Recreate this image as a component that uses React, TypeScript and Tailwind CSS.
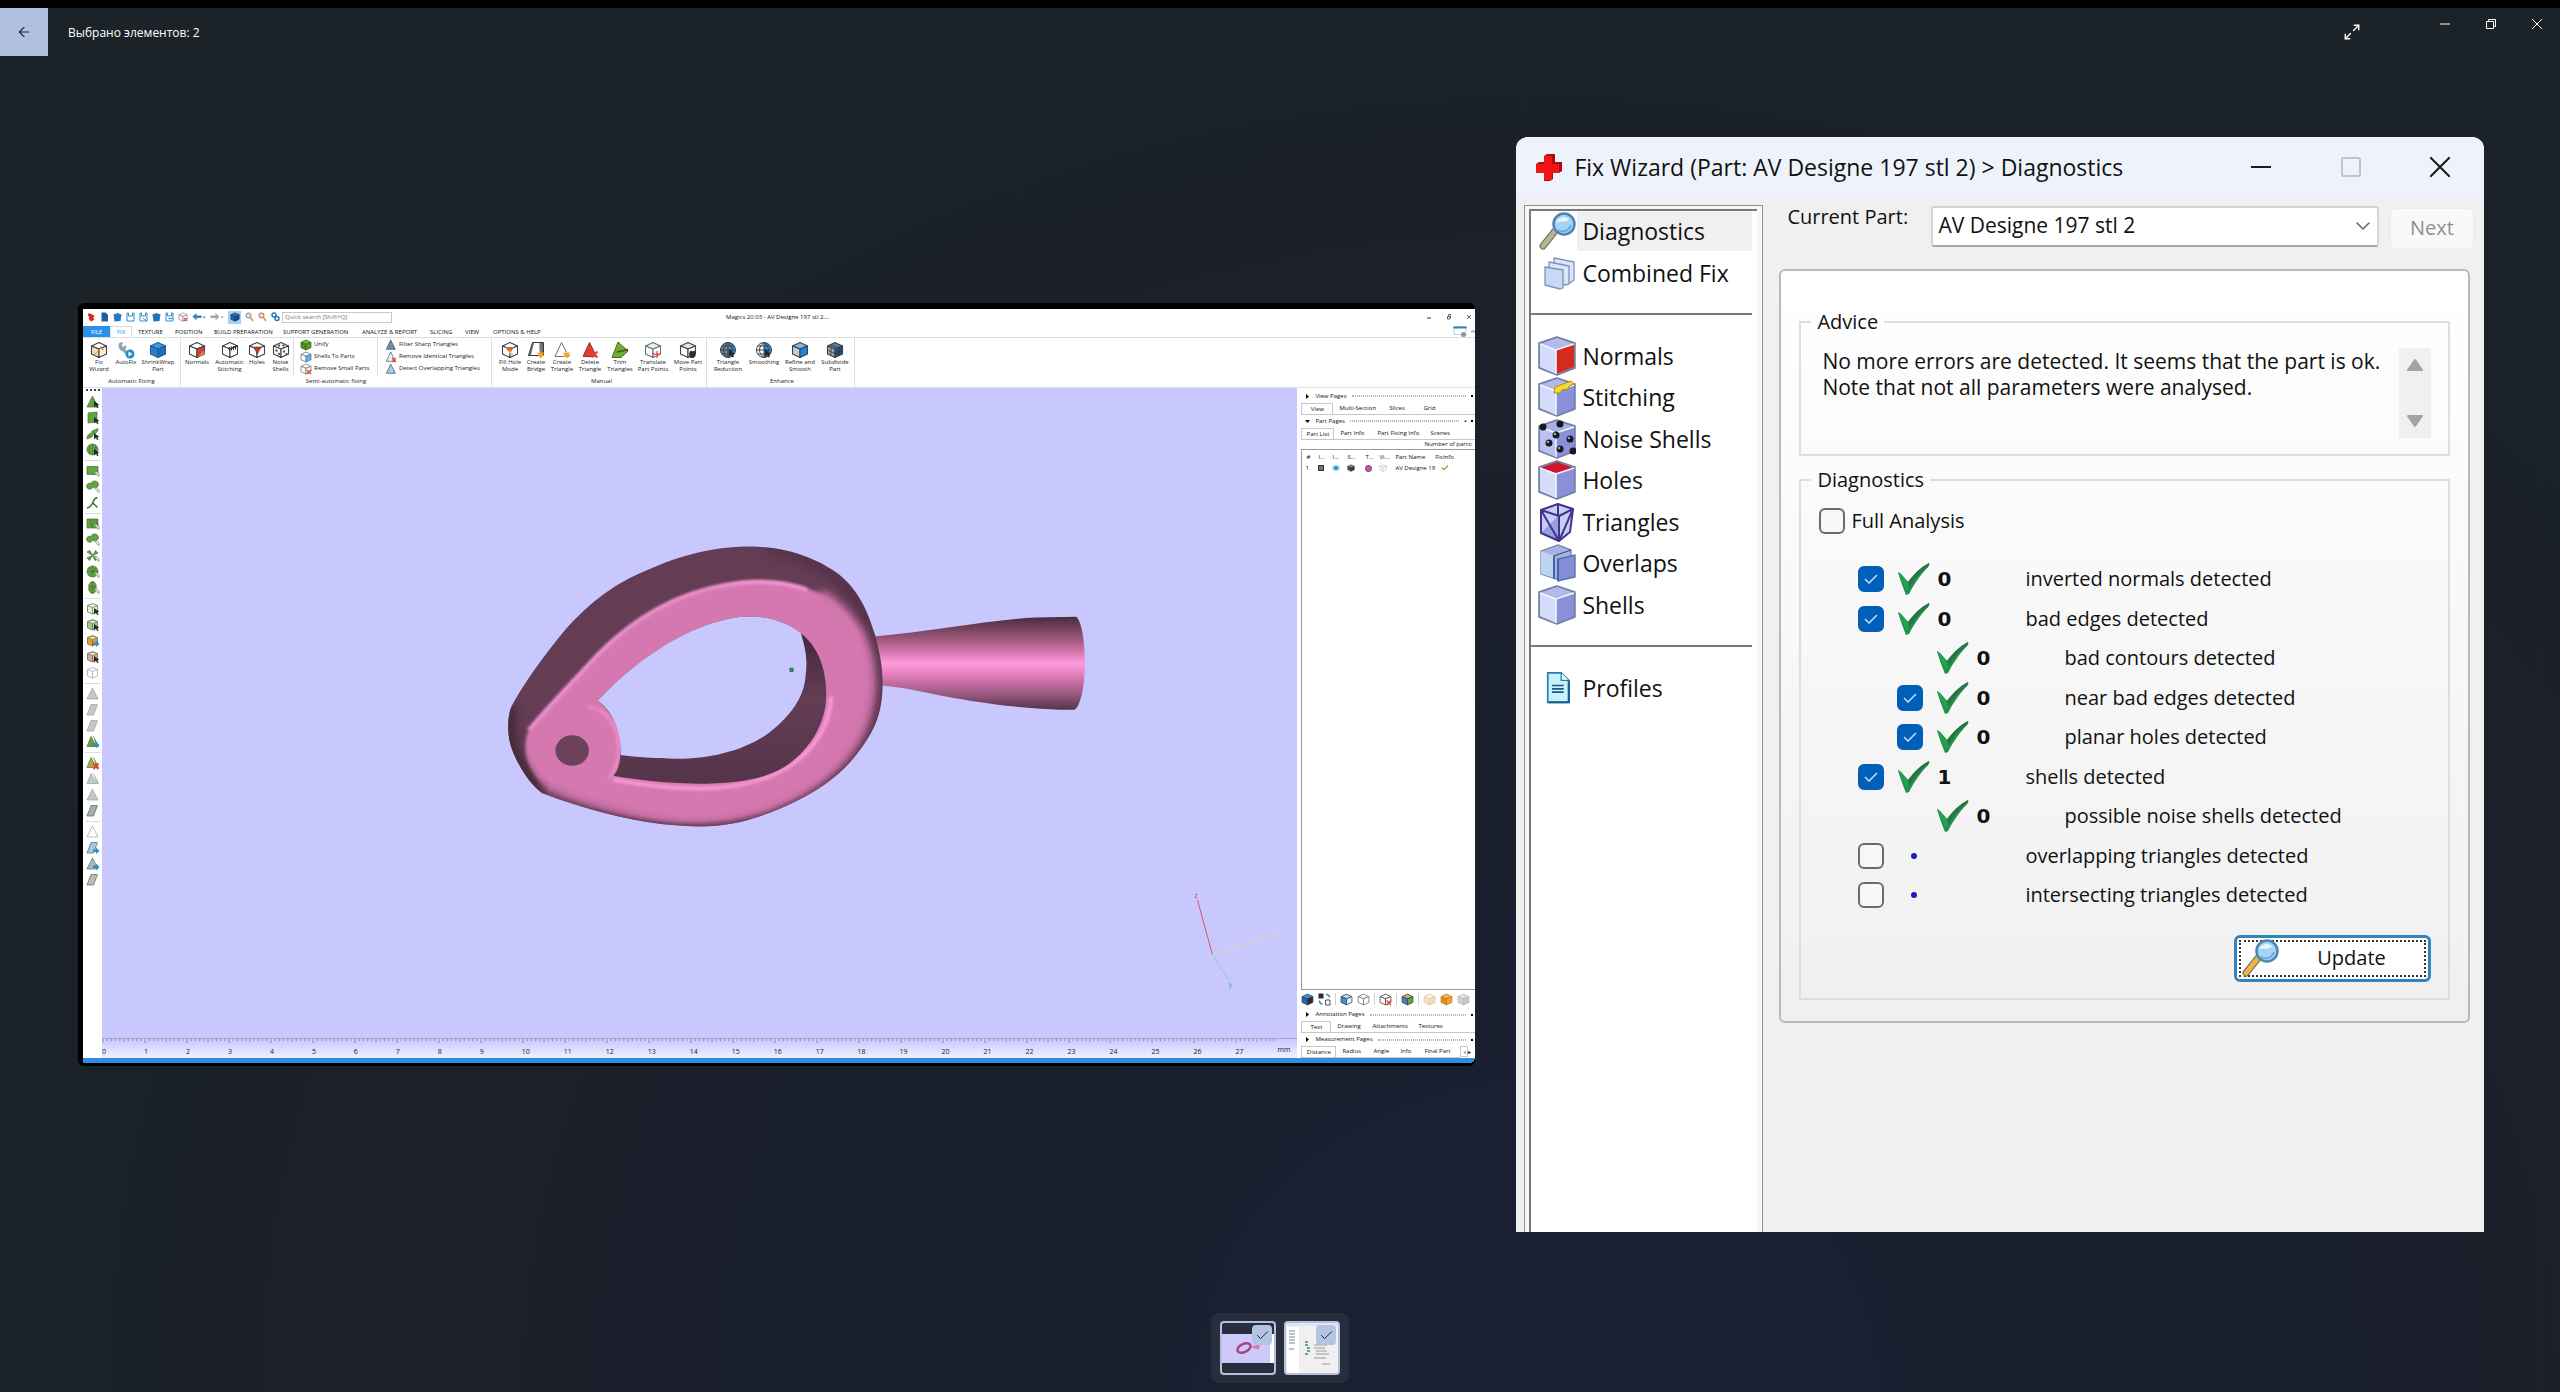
import React from 'react';
import { ArrowLeft, Check, ChevronDown, Maximize2 } from 'lucide-react';

/* ---------- ribbon icons ---------- */

interface CubeProps {
  size?: number;
  line?: string;
  top?: string;
  left?: string;
  right?: string;
  children?: React.ReactNode;
}

const Cube: React.FC<CubeProps> = ({
  size = 18,
  line = '#3d4248',
  top = '#fff',
  left = '#fff',
  right = '#fff',
  children,
}) => (
  <svg width={size} height={size} viewBox="0 0 36 36" className="shrink-0">
    <g stroke={line} strokeWidth="2.2" strokeLinejoin="round">
      <path d="M3 10 18 3l15 7-15 6z" fill={top} />
      <path d="M3 10l15 6v17L3 26z" fill={left} />
      <path d="M33 10l-15 6v17l15-7z" fill={right} />
    </g>
    {children}
  </svg>
);

const Cursor = () => <path d="M20 16v15l4-4 3 6 3-2-3-5h5z" fill="#22282e" />;
const Star = () => <path d="M27 19l2 5 5-2-2 5 4 3-6 1-2 5-3-5-6 1 4-4-3-5 5 1z" fill="#f0a92e" />;

const Globe: React.FC<{ dark: string }> = ({ dark }) => (
  <svg width="18" height="18" viewBox="0 0 36 36" className="shrink-0">
    <circle cx="18" cy="18" r="15" fill="#fff" />
    <path d="M18 3a15 15 0 0 1 0 30z" fill="#2f8ee0" />
    <path d="M18 3a15 15 0 0 0 0 30z" fill={dark} />
    <g fill="none" stroke="#3d4248" strokeWidth="2">
      <circle cx="18" cy="18" r="15" />
      <path d="M18 3v30M3 18h30M6 10h24M6 26h24M18 3c-12 8-12 22 0 30M18 3c12 8 12 22 0 30" />
    </g>
    <Cursor />
  </svg>
);

const Tri: React.FC<{ fill: string; line: string; children?: React.ReactNode; size?: number }> = ({
  fill,
  line,
  children,
  size = 18,
}) => (
  <svg width={size} height={size} viewBox="0 0 36 36" className="shrink-0">
    <path d="M17 3 31 31H4z" fill={fill} stroke={line} strokeWidth="2" strokeLinejoin="round" />
    {children}
  </svg>
);

const RedX = () => <path d="M21 21l12 12M33 21 21 33" stroke="#e5443a" strokeWidth="4" />;

interface RibbonItem {
  lines: string[];
  width: string;
  icon: React.ReactNode;
}

const autoFixing: RibbonItem[] = [
  {
    lines: ['Fix', 'Wizard'],
    width: 'w-8',
    icon: (
      <Cube left="#f7d9b0" right="#fbeedd">
        <path d="M8 28 22 14M21 10l1 6 6 1" stroke="#e0973a" strokeWidth="2" fill="none" />
      </Cube>
    ),
  },
  {
    lines: ['AutoFix'],
    width: 'w-[22px]',
    icon: (
      <svg width="18" height="18" viewBox="0 0 36 36">
        <path d="M3 8c0-5 6-7 10-4l-4 4 4 4 5-4c2 5 0 7-2 8l9 9-4 5-10-10C6 20 3 13 3 8z" fill="#9aa2a9" />
        <circle cx="26" cy="26" r="9" fill="#1c8fd0" />
        <path d="M23 21v10l8-5z" fill="#fff" />
      </svg>
    ),
  },
  { lines: ['ShrinkWrap', 'Part'], width: 'w-[42px]', icon: <Cube top="#3a9bea" left="#2680d3" right="#1f6fbe" line="#2b5c88" /> },
];

const semiAutomatic: RibbonItem[] = [
  {
    lines: ['Normals'],
    width: 'w-8',
    icon: (
      <Cube right="#d94330">
        <path d="M18 33l15-14v7z" fill="#f08a3c" />
      </Cube>
    ),
  },
  {
    lines: ['Automatic', 'Stitching'],
    width: 'w-[33px]',
    icon: (
      <Cube>
        <path d="M17 12v8M21 11v8M25 10v8M29 9v8M15 16l18-6" stroke="#2a2f35" strokeWidth="2" />
      </Cube>
    ),
  },
  {
    lines: ['Holes'],
    width: 'w-[22px]',
    icon: (
      <Cube>
        <path d="M11 12h15l-7 14z" fill="#c4342a" stroke="#3d2a28" />
      </Cube>
    ),
  },
  {
    lines: ['Noise', 'Shells'],
    width: 'w-[25px]',
    icon: (
      <Cube>
        <g fill="#5a6067">
          <circle cx="14" cy="9" r="2.4" />
          <circle cx="23" cy="9" r="2.4" />
          <circle cx="9" cy="19" r="2.4" />
          <circle cx="24" cy="21" r="2.4" />
          <circle cx="14" cy="26" r="2.4" />
          <circle cx="29" cy="26" r="2.4" />
        </g>
      </Cube>
    ),
  },
];

const manual: RibbonItem[] = [
  {
    lines: ['Fill Hole', 'Mode'],
    width: 'w-[26px]',
    icon: (
      <Cube>
        <path d="M8 12h18l-8 13z" fill="#d26a35" />
        <path d="M15 20l8 8" stroke="#e9b98c" strokeWidth="4" />
      </Cube>
    ),
  },
  {
    lines: ['Create', 'Bridge'],
    width: 'w-[26px]',
    icon: (
      <svg width="18" height="18" viewBox="0 0 36 36">
        <path d="M11 3h22v26H3z" fill="#6d757c" stroke="#343a40" strokeWidth="2" />
        <path d="M14 4h11v24H8z" fill="#fff" />
        <Star />
      </svg>
    ),
  },
  {
    lines: ['Create', 'Triangle'],
    width: 'w-[26px]',
    icon: (
      <Tri fill="#fff" line="#6b7178">
        <Star />
      </Tri>
    ),
  },
  {
    lines: ['Delete', 'Triangle'],
    width: 'w-[30px]',
    icon: (
      <Tri fill="#e23c32" line="#a52a24">
        <RedX />
      </Tri>
    ),
  },
  {
    lines: ['Trim', 'Triangles'],
    width: 'w-[30px]',
    icon: (
      <svg width="18" height="18" viewBox="0 0 36 36">
        <path d="M14 2 34 20 20 33 2 33z" fill="#74ac36" stroke="#436d1e" strokeWidth="2" />
        <path d="M12 22 34 17" stroke="#34591a" strokeWidth="3" />
      </svg>
    ),
  },
  {
    lines: ['Translate', 'Part Points'],
    width: 'w-[36px]',
    icon: (
      <Cube line="#6b7178" top="#e6f4fb">
        <path d="M16 26h16M26 20v14" stroke="#e5443a" strokeWidth="2.5" />
      </Cube>
    ),
  },
  {
    lines: ['Move Part', 'Points'],
    width: 'w-[34px]',
    icon: (
      <Cube top="#d7eefa">
        <path d="M21 22l3-3 3 2 3-2 3 3v8l-4 4h-6l-3-6z" fill="#2a2f35" />
      </Cube>
    ),
  },
];

const enhance: RibbonItem[] = [
  { lines: ['Triangle', 'Reduction'], width: 'w-[36px]', icon: <Globe dark="#7b848c" /> },
  { lines: ['Smoothing'], width: 'w-[36px]', icon: <Globe dark="#fff" /> },
  { lines: ['Refine and', 'Smooth'], width: 'w-[36px]', icon: <Cube top="#7fb7e8" left="#c3cbd2" right="#1d86e0" /> },
  {
    lines: ['Subdivide', 'Part'],
    width: 'w-[34px]',
    icon: (
      <Cube top="#557fa8" left="#9aa6b1" right="#23527f">
        <path d="M3 18l15 7 15-7M10 8l15 6M10 13v16M26 13v16" stroke="#2b3137" strokeWidth="1.5" fill="none" />
      </Cube>
    ),
  },
];

const RibbonGroup: React.FC<{ label: string; items: RibbonItem[]; className?: string; children?: React.ReactNode }> = ({
  label,
  items,
  className = '',
  children,
}) => (
  <div className={`flex flex-col border-r border-[#dedede] ${className}`}>
    <div className="flex h-[38px]">
      {items.map((item) => (
        <button key={item.lines.join(' ')} className={`flex flex-col items-center pt-[3px] ${item.width}`}>
          {item.icon}
          {item.lines.map((line) => (
            <span key={line} className="text-[6px] leading-[7px] whitespace-nowrap">
              {line}
            </span>
          ))}
        </button>
      ))}
      {children}
    </div>
    <div className="text-center text-[6px] leading-[11px]">{label}</div>
  </div>
);

const SmallCommand: React.FC<{ icon: React.ReactNode; text: string }> = ({ icon, text }) => (
  <button className="flex h-3 items-center gap-[2px] text-[6px] whitespace-nowrap">
    {icon}
    {text}
  </button>
);

/* ---------- Magics window ---------- */

const QuickAccess = () => (
  <div className="flex h-[17px] items-center">
    <div className="flex items-center gap-1 pl-1 text-[#2277bd]">
      <svg width="9" height="10" viewBox="0 0 18 20">
        <path d="M3 2l8 3 5 4-4 1 3 5-7 4-5-6 2-3-3-2z" fill="#d8261c" />
      </svg>
      <svg width="9" height="10" viewBox="0 0 18 20">
        <path d="M3 1h8l5 5v13H3z" fill="#1c5fa8" />
      </svg>
      <svg width="9" height="10" viewBox="0 0 18 20">
        <path d="M1 5l8-3 8 3-2 13-12 1z" fill="#2a78bd" />
      </svg>
      <svg width="9" height="10" viewBox="0 0 18 20">
        <path d="M2 2h3v6h8V2h3v16H2z" fill="none" stroke="#2f8fc6" strokeWidth="2" />
      </svg>
      <svg width="9" height="10" viewBox="0 0 18 20">
        <path d="M2 2h3v6h8V2h3v16H2zM8 12l8 6" fill="none" stroke="#2f8fc6" strokeWidth="2" />
      </svg>
      <svg width="9" height="10" viewBox="0 0 18 20">
        <path d="M1 5l8-3 8 3-2 13-12 1z" fill="#1f75b9" />
      </svg>
      <svg width="9" height="10" viewBox="0 0 18 20">
        <path d="M2 2h3v6h8V2h3v16H2zM7 13h9" fill="none" stroke="#2f8fc6" strokeWidth="2" />
      </svg>
      <Cube size={10} line="#7b8188">
        <RedX />
      </Cube>
      <svg width="14" height="10" viewBox="0 0 28 20">
        <path d="M1 9l8-7v5h10v5H9v5z" fill="#2b87d1" />
        <path d="M22 9h5l-3 4z" fill="#666" />
      </svg>
      <svg width="14" height="10" viewBox="0 0 28 20">
        <path d="M19 9l-8-7v5H1v5h10v5z" fill="#a3a9af" />
        <path d="M22 9h5l-3 4z" fill="#888" />
      </svg>
      <span className="grid h-[13px] w-[13px] place-items-center bg-[#a8d0f2]">
        <Cube size={10} top="#2a7cc2" left="#1f639f" right="#174f82" line="#123f69" />
      </span>
      <svg width="9" height="10" viewBox="0 0 18 20">
        <circle cx="7" cy="7" r="5" fill="#cfe2f2" stroke="#7b858e" strokeWidth="2" />
        <path d="M11 11l5 7" stroke="#dd9830" strokeWidth="3" />
      </svg>
      <svg width="9" height="10" viewBox="0 0 18 20">
        <circle cx="7" cy="7" r="5" fill="#fbe1dc" stroke="#c2574c" strokeWidth="2" />
        <path d="M11 11l5 7" stroke="#dd9830" strokeWidth="3" />
      </svg>
      <svg width="9" height="10" viewBox="0 0 18 20">
        <circle cx="6" cy="6" r="4" fill="none" stroke="#2277bd" strokeWidth="3" />
        <circle cx="12" cy="13" r="4" fill="none" stroke="#2277bd" strokeWidth="3" />
      </svg>
    </div>
    <input
      aria-label="Quick search"
      placeholder="Quick search [Shift+Q]"
      className="ml-[2px] h-[11px] w-[110px] border border-[#c8c8c8] px-[2px] text-[6px] placeholder:text-[#777]"
    />
    <div className="flex-1 pl-[334px] text-[6px] whitespace-nowrap text-[#111]">
      Magics 20.03 - AV Designe 197 stl 2....
    </div>
    <div className="flex gap-4 pr-1 text-[#333]">
      <button aria-label="Minimize">
        <svg width="4" height="6" viewBox="0 0 4 6">
          <path d="M0 4h4" stroke="currentColor" />
        </svg>
      </button>
      <button aria-label="Restore">
        <svg width="4" height="6" viewBox="0 0 8 12">
          <path d="M1 5h5v5H1zM3 4V1h5v6H6" fill="none" stroke="currentColor" strokeWidth="1.5" />
        </svg>
      </button>
      <button aria-label="Close">
        <svg width="4" height="6" viewBox="0 0 8 12">
          <path d="M0 2l8 8M8 2l-8 8" stroke="currentColor" strokeWidth="1.5" />
        </svg>
      </button>
    </div>
  </div>
);

const ribbonTabs = [
  { label: 'TEXTURE', width: 'w-[37px]' },
  { label: 'POSITION', width: 'w-[39px]' },
  { label: 'BUILD PREPARATION', width: 'w-[69px]' },
  { label: 'SUPPORT GENERATION', width: 'w-[79px]' },
  { label: 'ANALYZE & REPORT', width: 'w-[68px]' },
  { label: 'SLICING', width: 'w-[35px]' },
  { label: 'VIEW', width: 'w-[28px]' },
  { label: 'OPTIONS & HELP', width: 'w-[60px]' },
];

const RibbonTabs = () => (
  <div className="flex h-3 items-stretch border-b border-[#dedede] text-[6px] leading-[12px] text-[#111]">
    <button className="w-[27px] bg-[#2a8fe8] text-white">FILE</button>
    <button className="mr-[6px] w-[22px] border-x border-t border-[#dedede] leading-[10px] text-[#2a8fe8]">FIX</button>
    {ribbonTabs.map((tab) => (
      <button key={tab.label} className={`text-left whitespace-nowrap ${tab.width}`}>
        {tab.label}
      </button>
    ))}
    <span className="flex-1" />
    <svg width="22" height="11" viewBox="0 0 44 22">
      <path d="M2 1h24v16H2z" fill="#fff" stroke="#9cc8dc" strokeWidth="1.5" />
      <path d="M1 1h26v4H1z" fill="#2b87ab" />
      <circle cx="21" cy="17" r="5" fill="#8b9299" />
      <path d="M36 12l4-4 4 4z" fill="none" stroke="#555" />
    </svg>
  </div>
);

const Ribbon = () => (
  <div className="flex h-[50px] border-b border-[#e0e0e0] text-[#222]">
    <RibbonGroup label="Automatic Fixing" items={autoFixing} className="w-[98px]" />
    <RibbonGroup label="Semi-automatic fixing" items={semiAutomatic} className="w-[311px]">
      <div className="flex w-[84px] flex-col border-l border-[#dedede] pl-[6px] pt-[1px]">
        <SmallCommand text="Unify" icon={<Cube size={12} top="#79b23f" left="#4f8a22" right="#5d9a2c" line="#38651a" />} />
        <SmallCommand text="Shells To Parts" icon={<Cube size={12} right="#6db3ec" line="#4a6a86" />} />
        <SmallCommand
          text="Remove Small Parts"
          icon={
            <Cube size={12} line="#6a6f75">
              <RedX />
            </Cube>
          }
        />
      </div>
      <div className="flex flex-col border-l border-[#dedede] pl-[7px] pt-[1px]">
        <SmallCommand text="Filter Sharp Triangles" icon={<Tri size={12} fill="#6f8ea8" line="#33475a" />} />
        <SmallCommand
          text="Remove Identical Triangles"
          icon={
            <Tri size={12} fill="#eef3f7" line="#33475a">
              <RedX />
            </Tri>
          }
        />
        <SmallCommand text="Detect Overlapping Triangles" icon={<Tri size={12} fill="#9ccdea" line="#33475a" />} />
      </div>
    </RibbonGroup>
    <RibbonGroup label="Manual" items={manual} className="w-[215px] pl-[5px]" />
    <RibbonGroup label="Enhance" items={enhance} className="w-[148px] pl-[3px]" />
  </div>
);

const GREEN = '#5fa53a';
const GREY = '#c4c6c8';

type Tool = { shape: keyof typeof toolShapes; fill?: string; badge?: 'cursor' | 'brush' | 'x' | 'blue' };

const toolShapes = {
  triangle: 'M13 2 24 24H2z',
  quad: 'M4 4l18-2v20L4 24z',
  curve: 'M2 24c0-12 8-8 10-16l12-5c0 12-10 8-12 17z',
  sphere: 'M13 2a11 11 0 1 0 .1 0zM7 5v17M13 2v22M19 5v17',
  rect: 'M2 5h22v16H2z',
  blobs: 'M18 2a7 7 0 1 1-5 12 6 6 0 1 1-3-7 7 7 0 0 1 8-5z',
  branch: 'M2 24c8-2 10-6 12-12s4-8 9-9M14 14l9 9',
  mosaic: 'M2 4h22v18H2zM8 4l4 18M16 4l-4 18M20 4l2 18',
  burst: 'M13 13 2 6l6-3 5 10 6-10 5 5-11 5 11 6-6 4-5-10-6 10-5-5z',
  wheel: 'M13 2a11 11 0 1 0 .1 0zM13 2v22M2 13h22M5 5l16 16M21 5 5 21',
  oval: 'M13 1c10 0 10 24 0 24S3 1 13 1zM13 1v24M5 8l16 10M21 8 5 18',
  cube: 'M3 7l10-4 10 4v13l-10 4-10-4zM3 7l10 4 10-4M13 11v13',
  wedge: 'M10 3h13l-8 21H2z',
  pair: 'M10 3 20 23H2zM15 3l10 20h-5',
};

const toolGroups: Tool[][] = [
  [
    { shape: 'triangle', fill: GREEN, badge: 'cursor' },
    { shape: 'quad', fill: GREEN, badge: 'cursor' },
    { shape: 'curve', fill: GREEN, badge: 'cursor' },
    { shape: 'sphere', fill: GREEN, badge: 'cursor' },
  ],
  [{ shape: 'rect', fill: GREEN, badge: 'brush' }, { shape: 'blobs', fill: GREEN, badge: 'brush' }, { shape: 'branch' }],
  [
    { shape: 'mosaic', fill: GREEN, badge: 'brush' },
    { shape: 'blobs', fill: GREEN, badge: 'brush' },
    { shape: 'burst', fill: GREEN, badge: 'brush' },
    { shape: 'wheel', fill: GREEN, badge: 'brush' },
    { shape: 'oval', fill: GREEN, badge: 'brush' },
  ],
  [
    { shape: 'cube', fill: '#e3efda', badge: 'cursor' },
    { shape: 'cube', fill: '#a3cb86', badge: 'cursor' },
    { shape: 'cube', fill: '#e89a2b', badge: 'blue' },
    { shape: 'cube', fill: '#d9a49c', badge: 'cursor' },
    { shape: 'cube', fill: '#fff' },
  ],
  [
    { shape: 'triangle', fill: GREY },
    { shape: 'wedge', fill: GREY },
    { shape: 'wedge', fill: GREY },
    { shape: 'pair', fill: GREEN, badge: 'blue' },
  ],
  [
    { shape: 'pair', fill: '#a9a94a', badge: 'x' },
    { shape: 'pair', fill: GREY },
    { shape: 'triangle', fill: GREY },
    { shape: 'wedge', fill: '#aaaeb1' },
  ],
  [
    { shape: 'triangle', fill: '#fff' },
    { shape: 'wedge', fill: '#9fc9e6', badge: 'blue' },
    { shape: 'triangle', fill: '#a9b9c4', badge: 'blue' },
    { shape: 'wedge', fill: '#b9bbbd' },
  ],
];

const ToolIcon: React.FC<{ tool: Tool }> = ({ tool }) => {
  const pale = tool.fill === GREY || tool.fill === '#fff';
  return (
    <svg width="14" height="14" viewBox="0 0 28 28">
      <path
        d={toolShapes[tool.shape]}
        fill={tool.fill ?? 'none'}
        stroke={pale ? '#9a9ea2' : '#4c7040'}
        strokeWidth={tool.fill ? 1.4 : 3}
        strokeLinejoin="round"
      />
      {tool.badge === 'cursor' && <path d="M16 12v13l4-4 2 5 3-1-2-5h4z" fill="#20262b" />}
      {tool.badge === 'brush' && <path d="M17 16l8 9 2-3-7-8z" fill="#fff" stroke="#666" strokeWidth="1.4" />}
      {tool.badge === 'x' && <path d="M15 15l10 11M25 15 15 26" stroke="#e5443a" strokeWidth="4" />}
      {tool.badge === 'blue' && <path d="M14 17h6v-4l7 7-7 6v-4h-6z" fill="#2f8ad0" />}
    </svg>
  );
};

const ToolStrip = () => (
  <div className="flex w-[19px] shrink-0 flex-col items-center bg-white pt-[1px]">
    <div className="mb-px w-[14px] border-t-2 border-dotted border-[#444]" />
    {toolGroups.map((group, i) => (
      <div key={i} className="flex flex-col items-center border-b border-[#dcdcdc] py-[2px] last:border-0">
        {group.map((tool, j) => (
          <button key={j} aria-label={`${tool.shape} tool`} className="grid h-4 w-4 place-items-center">
            <ToolIcon tool={tool} />
          </button>
        ))}
      </div>
    ))}
  </div>
);

const BODY =
  'M75 560C110 480 160 400 200 340 270 240 340 185 400 155 500 100 580 80 665 80c95 2 165 40 215 85 50 50 70 115 88 185 12 60 18 100 17 150-1 90-25 140-55 190-40 70-100 120-150 150-80 50-160 80-240 80-120 0-250-35-390-100-30-30-50-65-70-120-18-50-15-110-5-140z';
const FACE =
  'M118 630C180 540 230 480 290 400 380 290 480 220 600 192c80-20 160-10 220 23 75 45 118 120 128 215 8 90-2 150-28 220-40 100-130 180-220 220-100 40-200 45-280 30-90-15-190-50-255-88-50-52-70-122-47-182z';
const OPENING =
  'M287 543c53-73 113-128 153-158 70-55 150-95 225-95 55 2 95 25 120 50 45 45 63 110 62 190-2 90-47 170-107 215-50 35-120 47-210 47-80-2-150-12-205-24 20-28 20-88 15-128-10-40-30-75-53-97z';
const THROUGH =
  'M287 543c53-73 113-128 153-158 70-55 150-95 225-95 55 2 95 25 120 50 15 60 15 90 12 120-2 70-37 130-97 185-60 50-140 72-220 72-50 0-100-5-137-11 2-56-13-126-56-163z';
const CONE =
  'M966 350c134-15 284-50 394-57l100-2c28 29 30 249-4 279-126 0-256-25-356-50-60-15-90-20-115-23z';

const Part = () => (
  <svg viewBox="0 0 1196 651" preserveAspectRatio="xMidYMid slice" className="h-full w-full">
    <defs>
      <linearGradient id="cone" x1="0" y1="0" x2="0" y2="1">
        <stop offset="0" stopColor="#4a2c3e" />
        <stop offset="0.2" stopColor="#90506f" />
        <stop offset="0.38" stopColor="#d676af" />
        <stop offset="0.5" stopColor="#ff9bdd" />
        <stop offset="0.65" stopColor="#da78b2" />
        <stop offset="0.85" stopColor="#91557a" />
        <stop offset="1" stopColor="#54334a" />
      </linearGradient>
      <linearGradient id="inside" x1="0" y1="0" x2="0" y2="1">
        <stop offset="0" stopColor="#3c2433" />
        <stop offset="0.5" stopColor="#643d55" />
        <stop offset="1" stopColor="#54344a" />
      </linearGradient>
      <filter id="soft" x="-20%" y="-20%" width="140%" height="140%">
        <feGaussianBlur stdDeviation="12" />
      </filter>
      <filter id="edge" x="-20%" y="-20%" width="140%" height="140%">
        <feGaussianBlur stdDeviation="4" />
      </filter>
      <clipPath id="body">
        <path d={BODY} />
      </clipPath>
    </defs>
    <g transform="translate(379 132) scale(0.408 0.3333)">
      <path d={CONE} fill="url(#cone)" />
      <path d={BODY} fill="#643c54" />
      <g clipPath="url(#body)">
        <path d={FACE} fill="#d678b0" filter="url(#edge)" />
        <path
          d="M840 235c80 80 115 145 115 245 0 110-30 190-85 255-90 100-190 155-320 160-130 0-260-35-390-95"
          fill="none"
          stroke="#d276ad"
          strokeWidth="40"
          strokeLinecap="round"
          filter="url(#soft)"
        />
        <path
          d="M700 90c170 30 265 150 283 390 4 150-70 300-220 380-130 80-260 80-400 40-90-25-150-50-230-95"
          fill="none"
          stroke="#4a2b40"
          strokeWidth="15"
          filter="url(#soft)"
        />
        <path
          d="M118 630C180 540 230 480 290 400 380 290 480 220 600 195c80-18 150-8 200 15"
          fill="none"
          stroke="#ff9fdf"
          strokeWidth="9"
          filter="url(#edge)"
        />
        <path d="M75 560c-15 80 0 170 75 262" fill="none" stroke="#3f2636" strokeWidth="26" filter="url(#soft)" />
      </g>
      <path
        d="M325 780c70 15 140 26 210 26 90 0 160-20 220-65 60-50 100-120 104-210"
        fill="none"
        stroke="#ff9fdf"
        strokeWidth="9"
        filter="url(#edge)"
      />
      <path d={OPENING} fill="url(#inside)" />
      <path d={THROUGH} fill="#c8c8ff" />
      <path d="M262 560c45 5 78 60 76 135-2 35-10 60-24 80" fill="none" stroke="#f493d0" strokeWidth="6" filter="url(#edge)" />
      <ellipse cx="224" cy="692" rx="41" ry="46" fill="#6b415b" />
      <path d="M758 445h8v10h-8z" fill="#2e9a6a" stroke="#1f5f49" strokeWidth="2" />
    </g>
    <g fill="none" strokeWidth="1">
      <path d="M1111 567l-15-55" stroke="#e0506a" />
      <path d="M1111 567l65-22" stroke="#dcdcb4" />
      <path d="M1111 567l17 27" stroke="#8fc7e6" />
    </g>
    <g fontFamily="Open Sans, sans-serif" fontSize="7">
      <text x="1093" y="510" fill="#e0305a">
        z
      </text>
      <text x="1127" y="599" fill="#3aa870">
        y
      </text>
    </g>
  </svg>
);

const Ruler = () => (
  <div className="grid h-5 shrink-0 grid-cols-[repeat(28,42fr)_20fr] border-t border-[#a9a9c4] bg-gradient-to-b from-[#c8c8ff] to-[#f0f0ff] text-[7px] leading-[10px] text-[#222]">
    {Array.from({ length: 28 }, (_, n) => (
      <div key={n} className="flex flex-col">
        <svg viewBox="0 0 40 4" preserveAspectRatio="none" className="h-1 w-full">
          <path d="M1 0v4M5 0v2M9 0v2M13 0v2M17 0v2M21 0v3M25 0v2M29 0v2M33 0v2M37 0v2" stroke="#77778c" strokeWidth="0.7" />
        </svg>
        <span className="mt-1">{n}</span>
      </div>
    ))}
    <span className="pt-[6px]">mm</span>
  </div>
);

const PanelHeading: React.FC<{ title: string; open?: boolean }> = ({ title, open }) => (
  <div className="flex h-[13px] shrink-0 items-center gap-[5px] pl-1 pr-[2px]">
    <svg width="5" height="5" viewBox="0 0 10 10">
      <path d={open ? 'M0 2h10l-5 6z' : 'M2 0l6 5-6 5z'} fill="#000" />
    </svg>
    <span>{title}</span>
    <span className="h-[2px] flex-1 border-y border-dotted border-[#b4b4b4]" />
    {open && <span>▪</span>}
    <span className="h-[2px] w-[2px] bg-black" />
  </div>
);

const PanelTabs: React.FC<{ tabs: { label: string; width: string }[] }> = ({ tabs }) => (
  <div className="flex h-3 shrink-0 items-end border-b border-[#c8c8c8]">
    {tabs.map((tab, i) => (
      <button
        key={tab.label}
        className={`h-[11px] leading-[11px] whitespace-nowrap ${tab.width} ${
          i === 0 ? 'border-x border-t border-[#c8c8c8] text-center' : 'pl-[6px] text-left'
        }`}
      >
        {tab.label}
      </button>
    ))}
  </div>
);

const SidePanel = () => (
  <div className="flex w-[178px] shrink-0 flex-col overflow-hidden bg-white pl-[4px] pt-[2px] text-[6px] leading-[9px] text-[#111]">
    <PanelHeading title="View Pages" />
    <PanelTabs
      tabs={[
        { label: 'View', width: 'w-8' },
        { label: 'Multi-Section', width: 'w-[50px]' },
        { label: 'Slices', width: 'w-[34px]' },
        { label: 'Grid', width: 'w-8' },
      ]}
    />
    <PanelHeading title="Part Pages" open />
    <PanelTabs
      tabs={[
        { label: 'Part List', width: 'w-[33px]' },
        { label: 'Part Info', width: 'w-[37px]' },
        { label: 'Part Fixing Info', width: 'w-[53px]' },
        { label: 'Scenes', width: 'w-8' },
      ]}
    />
    <div className="pr-[3px] text-right">Number of parts:</div>
    <div className="min-h-0 flex-1 border-y border-l border-[#9a9a9a]">
      <table className="mt-[3px] table-fixed text-left">
        <thead>
          <tr className="h-[10px] [&>th]:font-normal">
            <th className="w-[16px] pl-1">#</th>
            <th className="w-[14px]">I...</th>
            <th className="w-[15px]">I...</th>
            <th className="w-[18px]">S...</th>
            <th className="w-[14px]">T...</th>
            <th className="w-[16px]">Vi...</th>
            <th className="w-[39px]">Part Name</th>
            <th className="w-[25px]">FixInfo</th>
          </tr>
        </thead>
        <tbody>
          <tr className="h-[11px]">
            <td className="pl-[3px]">1</td>
            <td>
              <input
                type="checkbox"
                defaultChecked
                aria-label="Part selected"
                className="block h-[6px] w-[6px] appearance-none border border-[#333] checked:bg-[#777]"
              />
            </td>
            <td>
              <svg width="8" height="8" viewBox="0 0 16 16">
                <ellipse cx="8" cy="8" rx="8" ry="6" fill="#a7dcf5" />
                <circle cx="8" cy="8" r="4" fill="#2c8dc4" />
              </svg>
            </td>
            <td>
              <Cube size={8} top="#8b9095" left="#4c5054" right="#34383c" />
            </td>
            <td>
              <svg width="7" height="7" viewBox="0 0 14 14">
                <circle cx="7" cy="7" r="6" fill="#d0599a" stroke="#7c2f63" strokeWidth="2" />
              </svg>
            </td>
            <td>
              <Cube size={8} line="#b0b3b6" />
            </td>
            <td className="whitespace-nowrap">AV Designe 19</td>
            <td>
              <Check size={8} strokeWidth={4} className="ml-[6px] text-[#79b73a]" />
            </td>
          </tr>
        </tbody>
      </table>
    </div>
    <div className="flex h-[18px] shrink-0 items-center gap-[4px]">
      <Cube size={13} top="#3d9ade" left="#1e6aa8" right="#2a2f35" />
      <svg width="13" height="13" viewBox="0 0 26 26">
        <path d="M1 1h10v10H1z" fill="#2a2f35" />
        <path d="M15 14h9v10h-9z" fill="#fff" stroke="#555" strokeWidth="2" />
        <path d="M16 3c5 0 7 2 7 6M3 15c0 5 2 7 6 7" fill="none" stroke="#2f8ad0" strokeWidth="3" />
      </svg>
      <span className="h-3 w-px bg-[#d0d0d0]" />
      <Cube size={13} top="#bfe0f6" left="#3793d6" right="#e5f2fb" />
      <Cube size={13} line="#6b7178" />
      <span className="h-3 w-px bg-[#d0d0d0]" />
      <Cube size={13}>
        <RedX />
      </Cube>
      <span className="h-3 w-px bg-[#d0d0d0]" />
      <Cube size={13} top="#e5b257" left="#2f8ad0" right="#66a343" />
      <span className="h-3 w-px bg-[#d0d0d0]" />
      <Cube size={13} top="#faf0dd" left="#f3e2c4" right="#f1ddb8" line="#d8cbb2" />
      <Cube size={13} top="#f4bb4d" left="#e08f1f" right="#eda637" line="#c27c1b" />
      <Cube size={13} top="#e3e4e5" left="#d1d2d3" right="#c8c9ca" line="#b4b6b8" />
    </div>
    <PanelHeading title="Annotation Pages" />
    <PanelTabs
      tabs={[
        { label: 'Text', width: 'w-[30px]' },
        { label: 'Drawing', width: 'w-[35px]' },
        { label: 'Attachments', width: 'w-[46px]' },
        { label: 'Textures', width: 'w-8' },
      ]}
    />
    <PanelHeading title="Measurement Pages" />
    <div className="flex shrink-0">
      <PanelTabs
        tabs={[
          { label: 'Distance', width: 'w-[35px]' },
          { label: 'Radius', width: 'w-[31px]' },
          { label: 'Angle', width: 'w-[27px]' },
          { label: 'Info', width: 'w-[24px]' },
          { label: 'Final Part', width: 'w-[42px]' },
        ]}
      />
      <button aria-label="Scroll tabs left" className="h-[11px] w-2 border border-[#c8c8c8] leading-[8px] text-[#999]">
        ◂
      </button>
      <button aria-label="Scroll tabs right" className="h-[11px] leading-[10px]">
        ▸
      </button>
    </div>
  </div>
);

const MagicsShot = () => (
  <section className="flex aspect-[1398/764] min-w-0 flex-col overflow-hidden rounded-md bg-black pb-[3px] pl-[5px] pt-[6px]">
    <div className="flex flex-1 flex-col overflow-hidden rounded-br-md bg-white">
      <QuickAccess />
      <RibbonTabs />
      <Ribbon />
      <div className="flex min-h-0 flex-1">
        <ToolStrip />
        <div className="flex min-w-0 flex-1 flex-col">
          <div className="min-h-0 flex-1 bg-[#c8c8ff]">
            <Part />
          </div>
          <Ruler />
        </div>
        <SidePanel />
      </div>
      <div className="h-[5px] bg-[#2f8de0]" />
    </div>
  </section>
);

/* ---------- Fix Wizard window ---------- */

const Magnifier: React.FC<{ handle: string }> = ({ handle }) => (
  <svg width="38" height="38" viewBox="0 0 38 38">
    <path d="M17 19 5 34" stroke="#6d6a58" strokeWidth="7" strokeLinecap="round" />
    <path d="M17 19 5 34" stroke={handle} strokeWidth="5" strokeLinecap="round" />
    <circle cx="26" cy="12" r="10.5" fill="#a5d3f5" stroke="#4f86ad" strokeWidth="2.5" />
    <path d="M18 11c1-6 9-8 13-4-3 5-9 1-13 4z" fill="#e4f5ff" />
    <path d="M20 18c5 3 11 1 13-5" stroke="#6aa9dc" strokeWidth="2" fill="none" />
  </svg>
);

interface BlockProps {
  top?: string;
  left?: string;
  right?: string;
  children?: React.ReactNode;
}

const Block: React.FC<BlockProps> = ({ top = '#b3b9ea', left = '#d3dcf8', right = '#8a90d8', children }) => (
  <svg width="38" height="40" viewBox="0 0 38 40">
    <path d="M1 7 19 1l18 6v25L19 39 1 32z" fill="#8a90d8" stroke="#6e7fa0" strokeWidth="1.5" strokeLinejoin="round" />
    <path d="M2 8 19 2l17 6-18 5z" fill={top} />
    <path d="M2 8l16 6v24L2 31z" fill={left} />
    <path d="M36 8l-18 6v24l18-7z" fill={right} />
    <path d="M2 8l16 6 18-6M18 14v24" stroke="#f4f6ff" strokeWidth="1.5" fill="none" />
    {children}
  </svg>
);

const wizardPages: ({ label: string; icon: React.ReactNode } | null)[] = [
  { label: 'Diagnostics', icon: <Magnifier handle="#b9b58e" /> },
  {
    label: 'Combined Fix',
    icon: (
      <svg width="38" height="34" viewBox="0 0 38 34">
        <g fill="#dbe6fb" stroke="#7e93b8" strokeWidth="1.3" strokeLinejoin="round">
          <path d="M16 2l20 4v18l-4 3-16-5z" />
          <path d="M11 6l20 4v18l-4 1-16-4z" />
          <path d="M7 11l18 3v18l-3 1-15-4z" fill="#c8d8f6" />
        </g>
      </svg>
    ),
  },
  null,
  { label: 'Normals', icon: <Block right="#d42a20" /> },
  {
    label: 'Stitching',
    icon: (
      <Block>
        <path d="M16 16l1-6 16-6 3 3-5 2-1 3-6 1-2 3z" fill="#f5d92c" stroke="#a88d18" />
      </Block>
    ),
  },
  {
    label: 'Noise Shells',
    icon: (
      <Block top="#a9b0e2" left="#b9c2ee">
        <g fill="#15181f">
          <circle cx="5" cy="8" r="3.5" />
          <circle cx="22" cy="5" r="3.5" />
          <circle cx="18" cy="16" r="3.5" />
          <circle cx="11" cy="24" r="3.5" />
          <circle cx="32" cy="20" r="3.5" />
          <circle cx="22" cy="30" r="3.5" />
          <circle cx="35" cy="32" r="3.5" />
        </g>
        <g fill="#98a6b8">
          <circle cx="17" cy="15" r="1.3" />
          <circle cx="10" cy="23" r="1.3" />
          <circle cx="31" cy="19" r="1.3" />
          <circle cx="21" cy="29" r="1.3" />
        </g>
      </Block>
    ),
  },
  { label: 'Holes', icon: <Block top="#cf1730" /> },
  {
    label: 'Triangles',
    icon: (
      <svg width="38" height="40" viewBox="0 0 38 40">
        <path d="M3 8 20 2l15 5-3 23-11 9L3 31z" fill="#c9cdf4" />
        <path d="M20 14 3 31l18 8z" fill="#989ee0" />
        <g fill="none" stroke="#40348c" strokeWidth="2" strokeLinejoin="round">
          <path d="M3 8 20 2l15 5-3 23-11 9L3 31z" />
          <path d="M3 8l18 6 14-7M21 14v25M21 39 3 8M21 39 35 7M20 2v12" />
        </g>
      </svg>
    ),
  },
  {
    label: 'Overlaps',
    icon: (
      <svg width="38" height="40" viewBox="0 0 38 40">
        <path d="M3 8 20 2l13 5v22L18 36 3 31z" fill="#a9b2e6" stroke="#6e7fa0" strokeWidth="1.3" />
        <path d="M3 8l13 5v22L3 31z" fill="#bcd3f2" />
        <path d="M16 13 33 7" stroke="#456" strokeWidth="1.3" />
        <path d="M20 16l17-4v22l-17 4z" fill="#858dd6" stroke="#5a6aa6" strokeWidth="1.3" />
        <path d="M16 13v23M20 16v22" stroke="#3d68a8" strokeWidth="2" />
      </svg>
    ),
  },
  { label: 'Shells', icon: <Block /> },
  null,
  {
    label: 'Profiles',
    icon: (
      <svg width="38" height="32" viewBox="0 0 38 38">
        <path d="M8 1h16l9 9v26H8z" fill="#c9f0fb" stroke="#1f7fb2" strokeWidth="2" />
        <path d="M24 1v9h9" fill="#fff" stroke="#1f7fb2" strokeWidth="1.5" />
        <path d="M33 10v26H9" fill="none" stroke="#145c92" strokeWidth="2.5" />
        <path d="M13 16h14M13 20h14M13 24h14" stroke="#155a86" strokeWidth="2" />
      </svg>
    ),
  },
];

const WizardNav = () => (
  <nav className="w-[239px] shrink-0 border border-b-0 border-[#8d8f94] bg-[#f6f6f6] pl-1 pr-[5px] pt-[3px]">
    <div className="h-full border-l-2 border-t-2 border-[#77797e] bg-white">
      <ul className="grid h-[498px] auto-rows-fr pr-[5px]">
        {wizardPages.map((page, i) =>
          page ? (
            <li key={page.label} className="flex">
              <button className="flex flex-1 items-center text-left text-[23px]">
                <span className="grid w-[46px] place-items-center pl-[6px]">{page.icon}</span>
                <span className={`flex h-[40px] flex-1 items-center pl-[5px] ${i === 0 ? 'bg-[#f0f0f0]' : ''}`}>
                  {page.label}
                </span>
              </button>
            </li>
          ) : (
            <li key={i} className="flex items-center">
              <hr className="flex-1 border-t-2 border-[#77797e]" />
            </li>
          )
        )}
      </ul>
    </div>
  </nav>
);

const Tick: React.FC<{ id: string; checked?: boolean }> = ({ id, checked }) => (
  <span className="grid h-[26px] w-[26px] shrink-0 place-items-center">
    <input
      id={id}
      type="checkbox"
      defaultChecked={checked}
      className="peer col-start-1 row-start-1 h-[26px] w-[26px] appearance-none rounded-md border-2 border-[#6b6b6b] bg-[#f8f8f8] checked:border-[#005fb8] checked:bg-[#005fb8]"
    />
    <svg
      width="14"
      height="10"
      viewBox="0 0 14 10"
      className="pointer-events-none invisible col-start-1 row-start-1 peer-checked:visible"
    >
      <path d="M1 5l4 4 8-8" fill="none" stroke="#bcdcf8" strokeWidth="1.6" />
    </svg>
  </span>
);

const GreenCheck = () => (
  <svg width="33" height="32" viewBox="0 0 33 32">
    <path d="M1 9l3 2 7 8C17 11 24 4 32 0c1 1 0 3-1 4-7 7-14 17-19 27l-3 1C6 24 3 17 1 9z" fill="#1f9149" />
    <path d="M11 19C17 11 24 4 32 0l-1 4C24 8 17 16 12 25z" fill="#2c7447" />
    <path d="M1 9l3 2 7 8 1 6-2 3C7 22 3 16 1 9z" fill="#22a14e" />
  </svg>
);

interface Finding {
  text: string;
  count?: number;
  box?: 'on' | 'off';
  nested?: boolean;
}

const findings: Finding[] = [
  { text: 'inverted normals detected', count: 0, box: 'on' },
  { text: 'bad edges detected', count: 0, box: 'on' },
  { text: 'bad contours detected', count: 0, nested: true },
  { text: 'near bad edges detected', count: 0, box: 'on', nested: true },
  { text: 'planar holes detected', count: 0, box: 'on', nested: true },
  { text: 'shells detected', count: 1, box: 'on' },
  { text: 'possible noise shells detected', count: 0, nested: true },
  { text: 'overlapping triangles detected', box: 'off' },
  { text: 'intersecting triangles detected', box: 'off' },
];

const FindingRow: React.FC<{ finding: Finding; index: number }> = ({ finding, index }) => {
  const id = `finding-${index}`;
  return (
    <li className={`flex items-center ${finding.nested ? 'pl-[96px]' : 'pl-[57px]'}`}>
      {finding.box ? <Tick id={id} checked={finding.box === 'on'} /> : <span className="w-[26px]" />}
      <span className="ml-[13px] grid w-[33px] place-items-center">
        {finding.count !== undefined ? <GreenCheck /> : <span className="h-[6px] w-[6px] rounded-full bg-[#1d1dc0]" />}
      </span>
      <b className="ml-[7px] w-[88px] font-['DejaVu_Sans',sans-serif]">{finding.count}</b>
      {finding.box ? <label htmlFor={id}>{finding.text}</label> : <span>{finding.text}</span>}
    </li>
  );
};

const FixWizard = () => (
  <section className="flex aspect-[968/1096] min-w-0 flex-col overflow-hidden rounded-t-xl bg-[#f0f0f0] text-[20px] text-[#111]">
    <header className="flex h-[61px] shrink-0 items-center bg-[#eef3fb] pl-[19px]">
      <svg width="28" height="28" viewBox="0 0 28 28">
        <path d="M9 3l3-2h8v8h7v9l-3 2h-6v6l-3 2H9v-8H1v-9l3-2h5z" fill="#a80d0d" />
        <path d="M9 3h8v8h7v9h-7v7H9v-7H1v-9h8z" fill="#f01414" />
      </svg>
      <h1 className="ml-[11px] flex-1 text-[23px] whitespace-nowrap">
        Fix Wizard (Part: AV Designe 197 stl 2) &gt; Diagnostics
      </h1>
      <button aria-label="Minimize" className="grid h-full w-[90px] place-items-center">
        <svg width="20" height="20" viewBox="0 0 20 20">
          <path d="M0 10h20" stroke="#1a1a1a" strokeWidth="2" />
        </svg>
      </button>
      <button aria-label="Maximize" disabled className="grid h-full w-[90px] place-items-center">
        <svg width="20" height="20" viewBox="0 0 20 20">
          <rect x="1" y="1" width="18" height="18" rx="1" fill="none" stroke="#c0c4cc" strokeWidth="2" />
        </svg>
      </button>
      <button aria-label="Close" className="grid h-full w-[88px] place-items-center">
        <svg width="20" height="20" viewBox="0 0 20 20">
          <path d="M0 0l20 20M20 0 0 20" stroke="#1a1a1a" strokeWidth="2" />
        </svg>
      </button>
    </header>

    <div className="flex flex-1 pl-2 pr-[10px] pt-[7px]">
      <WizardNav />
      <div className="ml-4 flex min-w-0 flex-1 flex-col">
        <div className="flex items-start pl-2">
          <label htmlFor="current-part" className="w-[144px] leading-[24px]">
            Current Part:
          </label>
          <div className="mt-px grid flex-1 items-center">
            <select
              id="current-part"
              className="col-start-1 row-start-1 h-[41px] w-full appearance-none rounded-[3px] border-2 border-[#d4d4d4] border-b-[#a8a8a8] bg-white pl-[5px] text-[21px]"
            >
              <option>AV Designe 197 stl 2</option>
            </select>
            <ChevronDown
              size={24}
              strokeWidth={1.5}
              className="pointer-events-none col-start-1 row-start-1 mr-1 justify-self-end text-[#606060]"
            />
          </div>
          <button
            disabled
            className="ml-[11px] mt-[3px] h-[41px] w-[84px] rounded-md border border-[#ebebeb] bg-[#f9f9f9] text-[#8f8f8f]"
          >
            Next
          </button>
        </div>

        <div className="mt-5 mr-1 flex flex-col rounded-md border-2 border-[#b9b9b9] bg-gradient-to-b from-white to-[#f0f0f0] px-[18px] pb-[21px] pt-[39px]">
          <fieldset className="h-[146px] border-2 border-[#dedede] pl-[21px] pr-[17px]">
            <legend className="-ml-[11px] px-[6px] leading-[24px]">Advice</legend>
            <div className="flex items-start pt-[14px]">
              <textarea
                readOnly
                aria-label="Advice"
                className="h-[90px] min-w-0 flex-1 resize-none overflow-hidden bg-transparent text-[21px] leading-[26px] whitespace-pre"
                value={
                  'No more errors are detected. It seems that the part is ok.\nNote that not all parameters were analysed.'
                }
              />
              <div className="flex h-[90px] w-8 flex-col items-center justify-between bg-[#f0f0f0] py-[9px]">
                <button aria-label="Scroll up">
                  <svg width="18" height="15" viewBox="0 0 18 15">
                    <path d="M9 3 16 13H2z" fill="#a3a3a3" stroke="#a3a3a3" strokeWidth="2" strokeLinejoin="round" />
                  </svg>
                </button>
                <button aria-label="Scroll down">
                  <svg width="18" height="15" viewBox="0 0 18 15">
                    <path d="M9 12 2 2h14z" fill="#a3a3a3" stroke="#a3a3a3" strokeWidth="2" strokeLinejoin="round" />
                  </svg>
                </button>
              </div>
            </div>
          </fieldset>

          <fieldset className="mt-3 border-2 border-[#dedede] pb-4">
            <legend className="ml-[10px] px-[6px] leading-[24px]">Diagnostics</legend>
            <div className="flex items-center gap-[6px] pl-[18px] pt-[14px]">
              <Tick id="full-analysis" />
              <label htmlFor="full-analysis">Full Analysis</label>
            </div>
            <ul className="mt-6 grid h-[355px] auto-rows-fr">
              {findings.map((finding, i) => (
                <FindingRow key={finding.text} finding={finding} index={i} />
              ))}
            </ul>
            <div className="mt-5 flex justify-end pr-[17px]">
              <button className="h-[47px] w-[197px] rounded-md border-[3px] border-[#2f86bd] bg-white p-[2px]">
                <span className="flex h-full items-center border-2 border-dotted border-[#333]">
                  <Magnifier handle="#f0b24c" />
                  <span className="flex-1 text-center">Update</span>
                </span>
              </button>
            </div>
          </fieldset>
        </div>
      </div>
    </div>
  </section>
);

/* ---------- photo viewer shell ---------- */

const Badge = () => (
  <span className="absolute right-[2px] top-[2px] grid h-5 w-5 place-items-center rounded bg-[#b3c3e4]">
    <Check size={15} strokeWidth={1.5} className="text-[#14203a]" />
  </span>
);

const Filmstrip = () => (
  <footer className="mb-[9px] flex justify-center">
    <div className="flex gap-2 rounded-lg bg-[#282e3c] px-[9px] py-2">
      <button aria-label="Magics" className="relative h-[54px] w-14 overflow-hidden rounded border-2 border-[#b3bfdd] bg-[#282e3c]">
        <span className="flex h-[29px] border-r-4 border-white bg-[#cfc8fb]">
          <svg viewBox="0 0 48 29" className="w-full">
            <ellipse cx="22" cy="14" rx="7" ry="4" transform="rotate(-25 22 14)" fill="none" stroke="#a9457f" strokeWidth="2.5" />
            <path d="M29 13l8-2v4z" fill="#d678b0" stroke="#d678b0" />
          </svg>
        </span>
        <Badge />
      </button>
      <button aria-label="Fix Wizard" className="relative h-[54px] w-14 overflow-hidden rounded border-2 border-[#b3bfdd] bg-[#f0f0f0]">
        <svg viewBox="0 0 52 50" className="h-full w-full">
          <path d="M0 0h52v3H0z" fill="#dfe6f2" />
          <path d="M1 4h12v46H1z" fill="#fff" />
          <path d="M3 8h6M3 11h6M3 14h6M3 17h6M3 20h6M3 26h5" stroke="#7c86a8" />
          <path d="M19 19h3M19 22h3M21 25h3M21 28h3M19 31h3" stroke="#2f9a55" strokeWidth="1.6" />
          <path d="M28 22h13M28 25h11M30 28h11M30 31h13M28 35h12M36 41h8" stroke="#9a9a9a" />
        </svg>
        <Badge />
      </button>
    </div>
  </footer>
);

const App: React.FC = () => (
  <div className="flex min-h-screen flex-col bg-[#1b2228] bg-[radial-gradient(ellipse_at_60%_100%,#1a1f34_0%,#1b2029_55%,#1b2228_80%)] font-['Open_Sans','Noto_Sans',sans-serif] text-white">
    <div className="h-2 bg-black" />
    <header className="flex h-12 items-center">
      <button aria-label="Back" className="grid h-12 w-12 place-items-center bg-[#b0c0e0] text-[#1c2740]">
        <ArrowLeft size={16} strokeWidth={1.8} />
      </button>
      <span className="ml-5 flex-1 pt-px text-[12px]">Выбрано элементов: 2</span>
      <button aria-label="Full screen" className="mr-[46px] grid h-12 w-12 place-items-center">
        <Maximize2 size={18} strokeWidth={1.8} />
      </button>
      <div className="flex self-start">
        <button aria-label="Minimize" className="grid h-8 w-[46px] place-items-center">
          <svg width="10" height="10" viewBox="0 0 10 10">
            <path d="M0 5h10" stroke="currentColor" />
          </svg>
        </button>
        <button aria-label="Restore" className="grid h-8 w-[46px] place-items-center">
          <svg width="10" height="10" viewBox="0 0 10 10">
            <path d="M.5 2.5h7v7h-7zM2.5 2V.5h7v7H8" fill="none" stroke="currentColor" />
          </svg>
        </button>
        <button aria-label="Close" className="grid h-8 w-[46px] place-items-center">
          <svg width="10" height="10" viewBox="0 0 10 10">
            <path d="M0 0l10 10M10 0 0 10" stroke="currentColor" />
          </svg>
        </button>
      </div>
    </header>
    <main className="grid flex-1 grid-cols-[1398fr_968fr] items-center gap-[41px] pl-[78px] pr-[76px]">
      <MagicsShot />
      <FixWizard />
    </main>
    <Filmstrip />
  </div>
);

export default App;
